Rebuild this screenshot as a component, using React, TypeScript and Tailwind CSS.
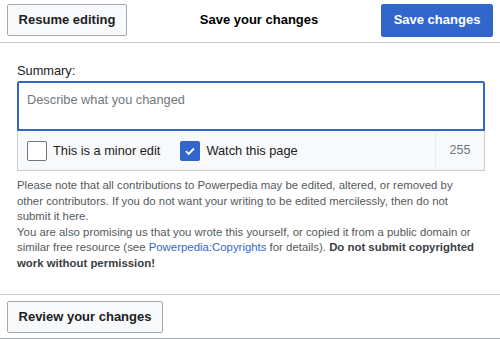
export default function App() {
  return (
    <div className="w-[500px] h-[339px] bg-white overflow-hidden text-[#202122]" style={{ fontFamily: '"Liberation Sans", Arial, sans-serif' }}>
      {/* header */}
      <div className="flex items-center justify-between h-[43px] px-[7px] pb-[2px] border-b border-[#c8ccd1]">
        <button className="h-[32px] w-[120px] rounded-[2px] border border-[#a2a9b1] bg-[#f8f9fa] text-[13px] font-bold text-[#202122]">
          Resume editing
        </button>
        <div className="text-[13px] font-bold text-[#000] ml-[10px]">Save your changes</div>
        <button className="h-[33px] w-[112px] rounded-[2px] border border-[#36c] bg-[#36c] text-[13px] font-bold text-white">
          Save changes
        </button>
      </div>

      <div className="px-[17px] pt-[18px]">
        <label className="block text-[12.8px] text-[#202122] leading-[20px]">Summary:</label>
        <div className="w-[468px]">
          <div className="h-[50px] border border-[#36c] shadow-[inset_0_0_0_1px_#36c] rounded-t-[2px] px-[9px] pt-[8px] text-[12.8px] text-[#72777d]">
            Describe what you changed
          </div>
          <div className="flex items-center h-[40px] bg-[#f8f9fa] border border-t-0 border-[#c8ccd1]">
            <div className="flex items-center pl-[9px]">
              <span className="w-[20px] h-[20px] border border-[#72777d] rounded-[2px] bg-white" />
              <span className="ml-[6px] text-[12.8px]">This is a minor edit</span>
            </div>
            <div className="flex items-center ml-[20px]">
              <span className="flex items-center justify-center w-[20px] h-[20px] rounded-[2px] bg-[#36c]">
                <svg width="14" height="14" viewBox="0 0 14 14">
                  <path d="M3 7.2l2.7 2.7L11 4.5" fill="none" stroke="white" strokeWidth="1.8" />
                </svg>
              </span>
              <span className="ml-[6px] text-[12.8px]">Watch this page</span>
            </div>
            <div className="ml-auto h-full w-[49px] border-l border-[#eaecf0] flex items-center justify-center text-[12.5px] text-[#72777d]">
              255
            </div>
          </div>
        </div>
        <div className="mt-[7px] text-[11.4px] leading-[15.6px] text-[#54595d] w-[462px]">
          <p>
            Please note that all contributions to Powerpedia may be edited, altered, or removed by other contributors. If you do not want your writing to be edited mercilessly, then do not submit it here.
          </p>
          <p>
            You are also promising us that you wrote this yourself, or copied it from a public domain or similar free resource (see <span className="text-[#36c]">Powerpedia:Copyrights</span> for details). <b className="text-[#3a3e42]">Do not submit copyrighted work without permission!</b>
          </p>
        </div>
      </div>

      <div className="mt-[22px] border-t border-[#c8ccd1] px-[7px] pt-[6px] h-[45px] border-b border-b-[#a2a9b1]">
        <button className="h-[32px] w-[156px] rounded-[2px] border border-[#a2a9b1] bg-[#f8f9fa] text-[13px] font-bold text-[#202122]">
          Review your changes
        </button>
      </div>
    </div>
  );
}
